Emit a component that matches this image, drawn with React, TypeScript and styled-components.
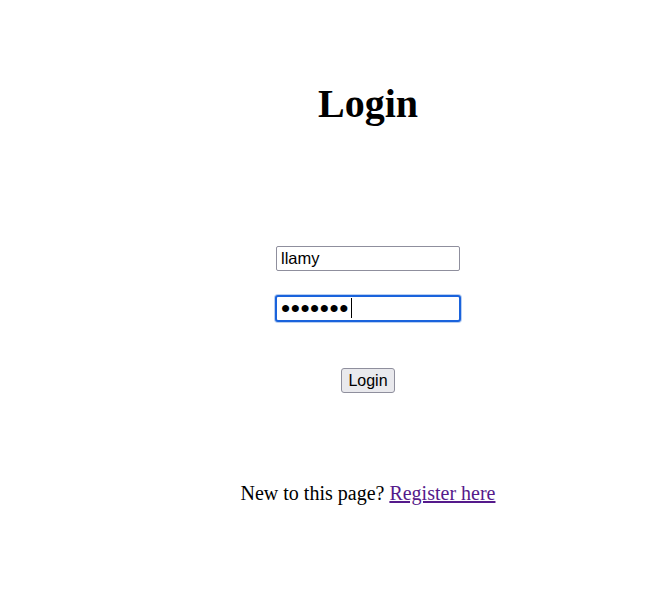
import React from "react";
import styled, { createGlobalStyle } from "styled-components";

const Global = createGlobalStyle`
  html, body { margin: 0; padding: 0; background: #ffffff; }
  body { font-family: "Liberation Serif", "Times New Roman", serif; color: #000; }
`;

const Page = styled.div`
  display: flex;
  flex-direction: column;
  align-items: center;
  padding-left: 90px;
  padding-top: 81px;
`;

const Title = styled.h1`
  margin: 0;
  font-family: "Liberation Serif", "Times New Roman", serif;
  font-weight: bold;
  font-size: 40px;
  line-height: 46px;
`;

const Form = styled.form`
  display: flex;
  flex-direction: column;
  align-items: center;
  margin-top: 119px;
`;

const Field = styled.input`
  box-sizing: border-box;
  width: 184px;
  height: 25px;
  margin: 0;
  padding: 1px 4px;
  font-family: "Liberation Sans", Arial, sans-serif;
  font-size: 16.5px;
  color: #000;
  background: #fff;
  border: 1px solid #8f8f9d;
  border-radius: 2px;
  outline: none;
`;

const FocusWrap = styled.div`
  position: relative;
  margin-top: 24px;
`;

const Secret = styled.input`
  box-sizing: border-box;
  display: block;
  width: 186px;
  height: 27px;
  margin: 0;
  padding: 0 4px;
  font-family: "Liberation Sans", Arial, sans-serif;
  font-size: 26px;
  letter-spacing: 0.6px;
  color: #000;
  background: #fff;
  border: 2px solid #1a63dc;
  border-radius: 3px;
  box-shadow: 0 0 0 1px #b9cff1;
  outline: none;
  caret-color: transparent;
`;

const Caret = styled.span`
  position: absolute;
  left: 76px;
  top: 3px;
  width: 1px;
  height: 20px;
  background: #000;
`;

const Button = styled.button`
  margin-top: 46px;
  box-sizing: border-box;
  height: 25px;
  padding: 0 6px;
  font-family: "Liberation Sans", Arial, sans-serif;
  font-size: 16px;
  color: #000;
  background: #e9e9ed;
  border: 1px solid #8f8f9d;
  border-radius: 3px;
`;

const Footer = styled.p`
  margin: 88px 0 0;
  font-size: 20px;
  line-height: 24px;
`;

const Link = styled.a`
  color: #551a8b;
  text-decoration: underline;
`;

export default function App() {
  return (
    <>
      <Global />
      <Page>
        <Title>Login</Title>
        <Form onSubmit={(e) => e.preventDefault()}>
          <Field type="text" defaultValue="llamy" />
          <FocusWrap>
            <Secret type="password" defaultValue="1234567" />
            <Caret />
          </FocusWrap>
          <Button type="submit">Login</Button>
        </Form>
        <Footer>
          New to this page? <Link href="#">Register here</Link>
        </Footer>
      </Page>
    </>
  );
}
